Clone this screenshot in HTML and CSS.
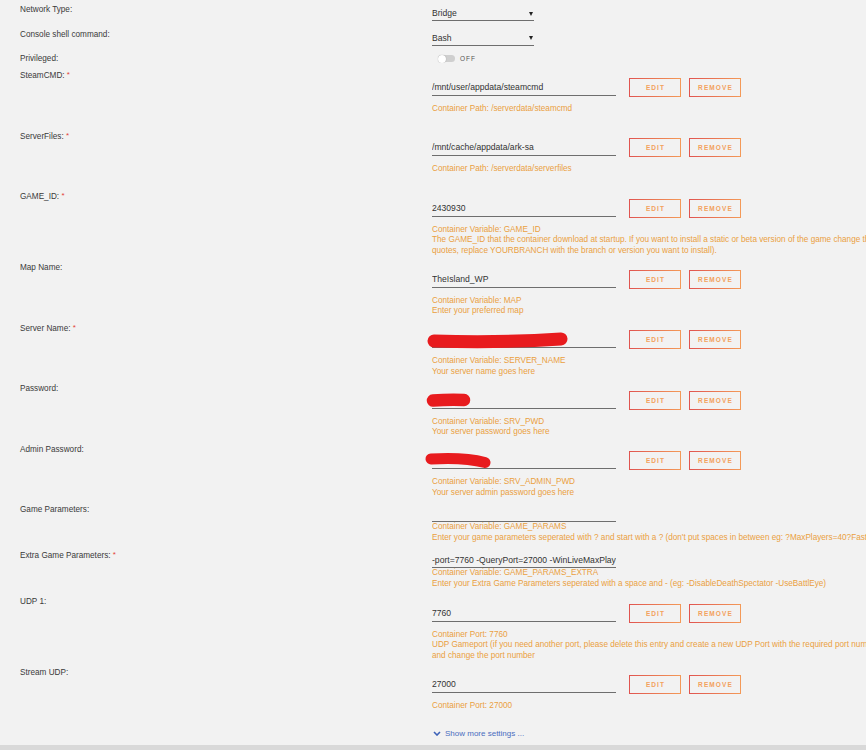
FILE: index.html
```html
<!DOCTYPE html>
<html>
<head>
<meta charset="utf-8">
<link rel="stylesheet" href="styles.css">
</head>
<body>
<div class="form">
  <div class="row r-select">
    <div class="label">Network Type:</div>
    <div class="field f-select"><div class="select">Bridge<span class="caret"></span></div></div>
  </div>
  <div class="row r-select">
    <div class="label">Console shell command:</div>
    <div class="field f-select"><div class="select">Bash<span class="caret"></span></div></div>
  </div>
  <div class="row r-toggle">
    <div class="label">Privileged:</div>
    <div class="field f-toggle"><span class="toggle"></span><span class="off">OFF</span></div>
  </div>

  <div class="row">
    <div class="label">SteamCMD: <span class="req">*</span></div>
    <div class="field f-btn">
      <div class="controls"><div class="input">/mnt/user/appdata/steamcmd</div><button class="btn">EDIT</button><button class="btn">REMOVE</button></div>
      <div class="desc"><div class="line">Container Path: /serverdata/steamcmd</div><div class="line"></div></div>
    </div>
  </div>

  <div class="row">
    <div class="label">ServerFiles: <span class="req">*</span></div>
    <div class="field f-btn">
      <div class="controls"><div class="input">/mnt/cache/appdata/ark-sa</div><button class="btn">EDIT</button><button class="btn">REMOVE</button></div>
      <div class="desc"><div class="line">Container Path: /serverdata/serverfiles</div><div class="line"></div></div>
    </div>
  </div>

  <div class="row">
    <div class="label">GAME_ID: <span class="req">*</span></div>
    <div class="field f-btn">
      <div class="controls"><div class="input">2430930</div><button class="btn">EDIT</button><button class="btn">REMOVE</button></div>
      <div class="desc"><div class="line">Container Variable: GAME_ID</div><div class="line">The GAME_ID that the container download at startup. If you want to install a static or beta version of the game change th</div><div class="line">quotes, replace YOURBRANCH with the branch or version you want to install).</div></div>
    </div>
  </div>

  <div class="row">
    <div class="label">Map Name:</div>
    <div class="field f-btn">
      <div class="controls"><div class="input">TheIsland_WP</div><button class="btn">EDIT</button><button class="btn">REMOVE</button></div>
      <div class="desc"><div class="line">Container Variable: MAP</div><div class="line">Enter your preferred map</div></div>
    </div>
  </div>

  <div class="row">
    <div class="label">Server Name: <span class="req">*</span></div>
    <div class="field f-btn">
      <div class="controls"><div class="input masked"><svg class="scribble" width="184" height="18" viewBox="0 0 184 18"><path d="M2 11 Q68 13 129 9" /></svg></div><button class="btn">EDIT</button><button class="btn">REMOVE</button></div>
      <div class="desc"><div class="line">Container Variable: SERVER_NAME</div><div class="line">Your server name goes here</div></div>
    </div>
  </div>

  <div class="row">
    <div class="label">Password:</div>
    <div class="field f-btn">
      <div class="controls"><div class="input masked"><svg class="scribble s2" width="184" height="18" viewBox="0 0 184 18"><path d="M1 9.5 Q16 8.5 32 9" /></svg></div><button class="btn">EDIT</button><button class="btn">REMOVE</button></div>
      <div class="desc"><div class="line">Container Variable: SRV_PWD</div><div class="line">Your server password goes here</div></div>
    </div>
  </div>

  <div class="row">
    <div class="label">Admin Password:</div>
    <div class="field f-btn">
      <div class="controls"><div class="input masked"><svg class="scribble s3" width="184" height="18" viewBox="0 0 184 18"><path d="M-1 8 Q32 6 53 11.5" /></svg></div><button class="btn">EDIT</button><button class="btn">REMOVE</button></div>
      <div class="desc"><div class="line">Container Variable: SRV_ADMIN_PWD</div><div class="line">Your server admin password goes here</div></div>
    </div>
  </div>

  <div class="row">
    <div class="label">Game Parameters:</div>
    <div class="field f-plain">
      <div class="input short"></div>
      <div class="desc"><div class="line">Container Variable: GAME_PARAMS</div><div class="line">Enter your game parameters seperated with ? and start with a ? (don't put spaces in between eg: ?MaxPlayers=40?FastD</div></div>
    </div>
  </div>

  <div class="row">
    <div class="label">Extra Game Parameters: <span class="req">*</span></div>
    <div class="field f-plain">
      <div class="input short">-port=7760 -QueryPort=27000 -WinLiveMaxPlayer</div>
      <div class="desc"><div class="line">Container Variable: GAME_PARAMS_EXTRA</div><div class="line">Enter your Extra Game Parameters seperated with a space and - (eg: -DisableDeathSpectator -UseBattlEye)</div></div>
    </div>
  </div>

  <div class="row">
    <div class="label">UDP 1:</div>
    <div class="field f-btn">
      <div class="controls"><div class="input">7760</div><button class="btn">EDIT</button><button class="btn">REMOVE</button></div>
      <div class="desc"><div class="line">Container Port: 7760</div><div class="line">UDP Gameport (if you need another port, please delete this entry and create a new UDP Port with the required port numb</div><div class="line">and change the port number</div></div>
    </div>
  </div>

  <div class="row">
    <div class="label">Stream UDP:</div>
    <div class="field f-btn">
      <div class="controls"><div class="input">27000</div><button class="btn">EDIT</button><button class="btn">REMOVE</button></div>
      <div class="desc"><div class="line">Container Port: 27000</div><div class="line"></div></div>
    </div>
  </div>

  <div class="row r-more">
    <div class="label"></div>
    <div class="field"><a class="more"><svg class="chev" width="8" height="5" viewBox="0 0 8 5"><path d="M1 1 L4 4 L7 1" /></svg>Show more settings ...</a></div>
  </div>
</div>
<div class="footer"></div>
</body>
</html>
```

FILE: styles.css
```css
html, body {
  margin: 0;
  height: 750px;
  overflow: hidden;
}
body {
  background: #f2f2f2;
  font-family: "Liberation Sans", Arial, sans-serif;
  color: #444;
  padding-top: 4px;
  box-sizing: border-box;
}
.form {
  display: flex;
  flex-direction: column;
}
.row {
  display: grid;
  grid-template-columns: 412px 1fr;
  padding-left: 20px;
  align-items: start;
}
.label {
  font-size: 8.2px;
  line-height: 10px;
  padding-top: 1px;
  color: #3a3a3a;
  white-space: nowrap;
}
.req {
  color: #e2403a;
  font-size: 8px;
  position: relative;
  top: -1px;
}
.field {
  min-width: 0;
  overflow: hidden;
}
.f-select {
  padding-top: 2px;
  padding-bottom: 7.5px;
}
.select {
  width: 102px;
  height: 13px;
  padding-top: 1px;
  line-height: 13px;
  border-bottom: 1px solid #6e6e6e;
  font-size: 8.6px;
  color: #333;
  display: flex;
  justify-content: space-between;
  align-items: center;
}
.caret {
  width: 0;
  height: 0;
  border-left: 2.5px solid transparent;
  border-right: 2.5px solid transparent;
  border-top: 4px solid #222;
  margin-right: 1px;
}
.r-toggle {
  padding-bottom: 6px;
}
.f-toggle {
  display: flex;
  align-items: center;
  padding-top: 1.5px;
  padding-left: 6px;
  height: 8px;
}
.toggle {
  width: 17px;
  height: 7px;
  border-radius: 4px;
  background: #cfcfcf;
  position: relative;
}
.toggle::before {
  content: "";
  position: absolute;
  left: 0;
  top: -0.5px;
  width: 8px;
  height: 8px;
  border-radius: 50%;
  background: #fff;
  box-shadow: 0 0 1px rgba(0,0,0,0.35);
}
.off {
  font-size: 6.5px;
  letter-spacing: 1px;
  color: #555;
  margin-left: 5px;
}
.f-btn {
  padding-top: 7.5px;
  padding-bottom: 6px;
  overflow: visible;
}
.controls {
  display: flex;
  align-items: flex-start;
  height: 19px;
  margin-bottom: 7px;
}
.input {
  width: 184px;
  height: 16px;
  padding-top: 1px;
  line-height: 16px;
  border-bottom: 1px solid #6e6e6e;
  font-size: 8.6px;
  color: #333;
  white-space: nowrap;
  overflow: hidden;
  flex: none;
}
.input.masked {
  position: relative;
  overflow: visible;
}
.scribble {
  position: absolute;
  left: 0;
  top: 0;
  overflow: visible;
}
.scribble path {
  fill: none;
  stroke: #e81b1e;
  stroke-width: 13;
  stroke-linecap: round;
}
.scribble.s2 path {
  stroke-width: 12.5;
}
.scribble.s3 path {
  stroke-width: 11;
}
.f-plain {
  padding-top: 2px;
  padding-bottom: 7px;
}
.input.short {
  height: 14px;
  line-height: 14px;
}
.btn {
  box-sizing: border-box;
  width: 52px;
  height: 19px;
  margin: 0 0 0 8px;
  padding: 0 0 0 1px;
  background: transparent;
  border: 1.6px solid;
  border-image: linear-gradient(90deg, #e05450, #f49a58) 1;
  border-radius: 0;
  font-family: "Liberation Sans", Arial, sans-serif;
  font-weight: bold;
  font-size: 6.5px;
  letter-spacing: 1.1px;
  color: #f3a15c;
  flex: none;
}
.input + .btn {
  margin-left: 13px;
}
.desc {
  font-size: 8.2px;
  line-height: 10.5px;
  color: #eaa03f;
  white-space: nowrap;
}
.line {
  height: 10.5px;
}
.r-more .field {
  padding-top: 1px;
  padding-bottom: 6px;
}
.more {
  display: flex;
  align-items: center;
  font-size: 8px;
  line-height: 10px;
  color: #4a6dbf;
}
.chev {
  margin-left: 1px;
  margin-right: 4px;
}
.chev path {
  fill: none;
  stroke: #3d62b8;
  stroke-width: 1.6;
}
.footer {
  height: 20px;
  background: #d9d9d9;
}
```
